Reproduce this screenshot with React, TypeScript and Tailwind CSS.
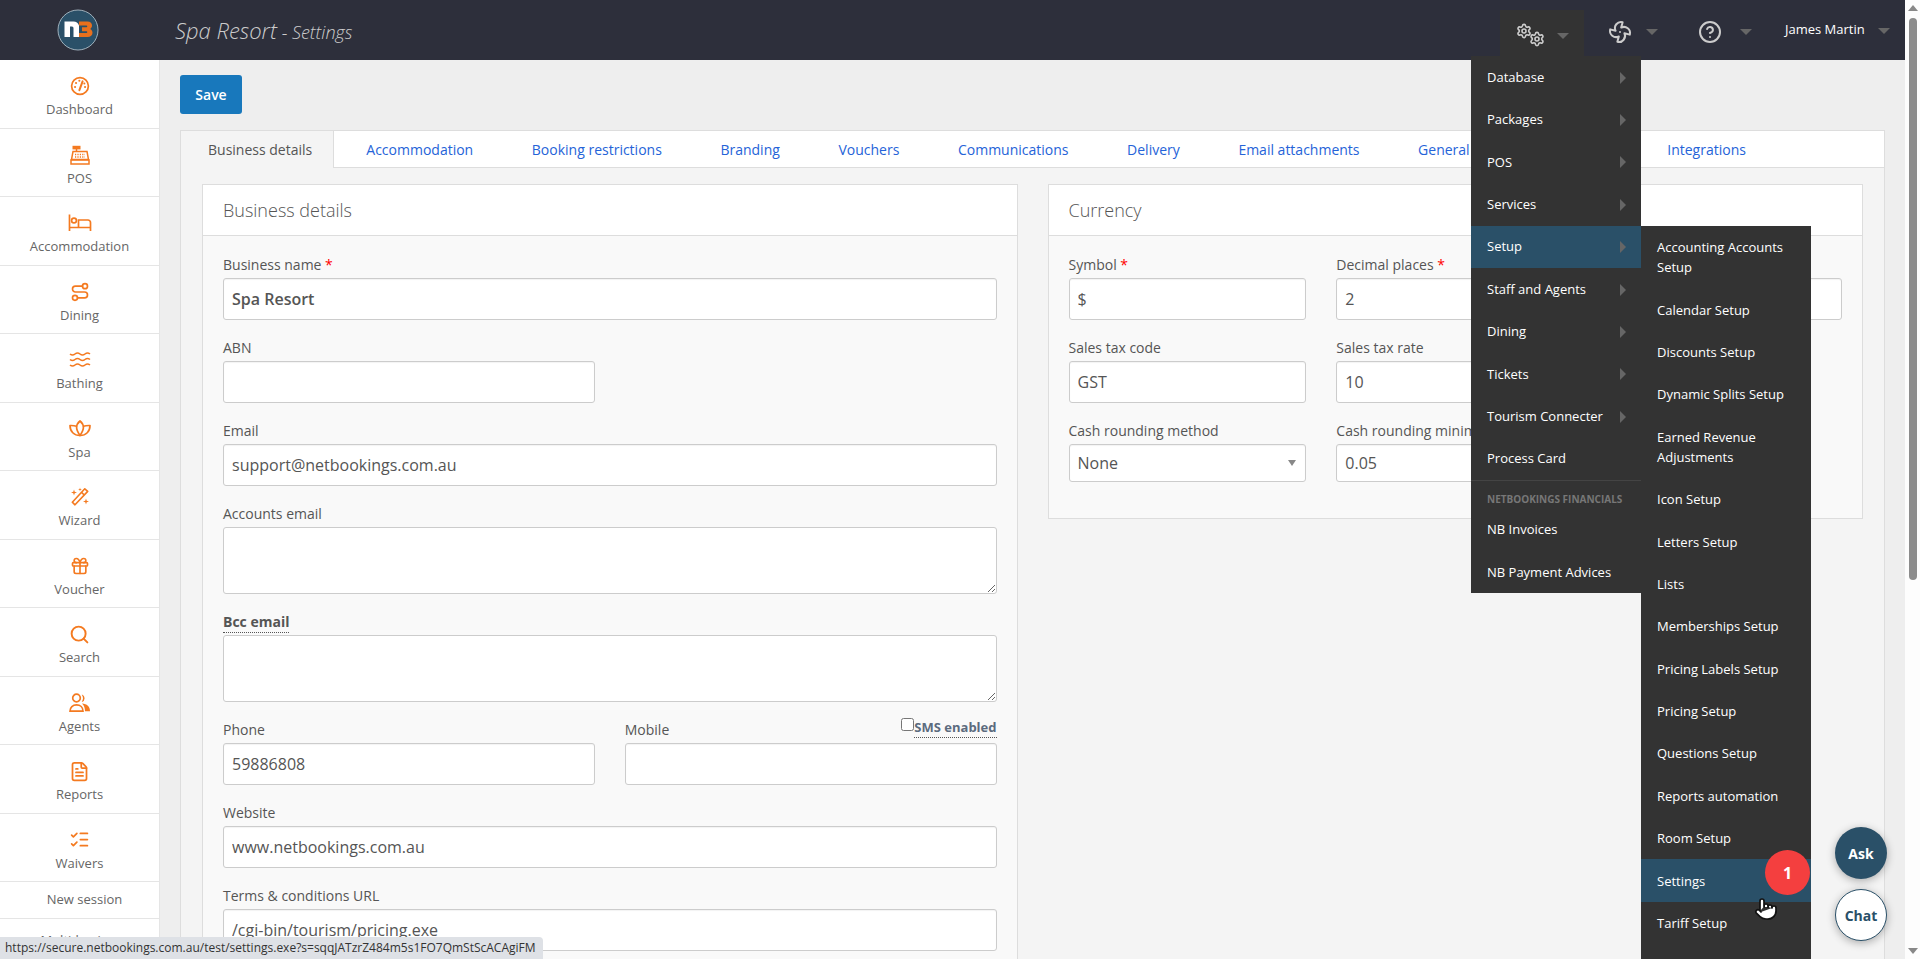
import React from "react";
import { Route, Gift, Search, FileText, ListChecks, Settings, Fan, HelpCircle, Pointer } from "lucide-react";

const O = "#f47a20";

const Gauge = () => (
  <svg width="20" height="20" viewBox="0 0 20 20" fill="none" stroke={O} strokeWidth="1.7" strokeLinecap="round">
    <circle cx="10" cy="10" r="8.4" />
    <path d="M9.4 14.2 12.6 5.4" strokeWidth="2" />
    <path d="M5 11h.1M6 7h.1M9.3 4.8h.1M15 11h.1M14.3 7.4h.1" strokeWidth="2" />
  </svg>
);
const Register = () => (
  <svg width="20" height="20" viewBox="0 0 20 20" fill="none" stroke={O} strokeWidth="1.5">
    <rect x="2.5" y="0.8" width="8" height="3.6" fill={O} stroke="none" />
    <path d="M6.5 4v2.5" />
    <path d="M3 6.5h14l1.5 8H1.5z" />
    <rect x="1" y="15" width="18" height="4" />
    <path d="M5 9.5h10M5 12h10" strokeDasharray="1.2 1.2" />
  </svg>
);
const Bed = () => (
  <svg width="24" height="20" viewBox="0 0 24 20" fill="none" stroke={O} strokeWidth="1.7">
    <path d="M1.5 1.5V18M1.5 14.5h21M22.5 18V9.5a2.5 2.5 0 0 0-2.5-2.5H10.5v7" />
    <circle cx="6" cy="7.5" r="2.4" />
  </svg>
);
const WavesI = () => (
  <svg width="22" height="20" viewBox="0 0 22 20" fill="none" stroke={O} strokeWidth="1.6">
    <path d="M1 4q2.5 2 5 0t5 0 5 0 5 0M1 9.5q2.5 2 5 0t5 0 5 0 5 0M1 15q2.5 2 5 0t5 0 5 0 5 0" />
  </svg>
);
const Lotus = () => (
  <svg width="22" height="20" viewBox="0 0 22 20" fill="none" stroke={O} strokeWidth="1.7" strokeLinejoin="round">
    <path d="M11 2c2.4 2 3.4 4 3.4 6.5 0 2.5-1.4 5-3.4 8-2-3-3.4-5.5-3.4-8C7.600 6 8.600 4 11 2z" />
    <path d="M7.700 7.300C5.500 6.600 3.500 6.400 1 6.500c0 6 4 10 10 10 6 0 10-4 10-10-2.500-.1-4.500.1-6.700.8" />
  </svg>
);
const Wand = () => (
  <svg width="20" height="20" viewBox="0 0 20 20" fill="none" stroke={O} strokeWidth="1.6" strokeLinejoin="round">
    <path d="M14.800 1.800 17.700 4.400 5 17.800 2.300 15.200z" />
    <path d="M11.500 5.300 14.300 8" />
    <path d="M4 2.500 4.700 4.800 7 5.500 4.700 6.200 4 8.500 3.300 6.200 1 5.500 3.300 4.800zM10 .6l.4 1.500 1.500.4-1.500.4-.4 1.500-.4-1.500-1.500-.4 1.500-.4zM16 11.500l.7 2.300 2.300.7-2.300.7-.7 2.300-.7-2.300-2.300-.7 2.300-.7z" fill={O} stroke="none" />
  </svg>
);
const Agents = () => (
  <svg width="22" height="20" viewBox="0 0 22 20" fill="none" stroke={O} strokeWidth="1.7">
    <circle cx="7.500" cy="5" r="3.800" />
    <path d="M1 18.200c0-4 2.800-6.300 6.500-6.300s6.500 2.300 6.500 6.300z" />
    <path d="M13 1.500a4 4 0 0 1 0 7.500c-.8-.2 1-1.500 1-3.800S12.200 1.700 13 1.500zM13 10.500c5 .2 8 3 8 7.700h-5c0-3-1-6-3-7.700z" fill={O} stroke="none" />
  </svg>
);

const side: [string, React.ReactNode][] = [
  ["Dashboard", <Gauge />],
  ["POS", <Register />],
  ["Accommodation", <Bed />],
  ["Dining", <Route size={20} color={O} strokeWidth={2} />],
  ["Bathing", <WavesI />],
  ["Spa", <Lotus />],
  ["Wizard", <Wand />],
  ["Voucher", <Gift size={20} color={O} strokeWidth={2} />],
  ["Search", <Search size={21} color={O} strokeWidth={2.2} />],
  ["Agents", <Agents />],
  ["Reports", <FileText size={21} color={O} strokeWidth={2} />],
  ["Waivers", <ListChecks size={21} color={O} strokeWidth={2} />],
];

const Star = () => <span className="text-[#f00]">*</span>;

function Label({ children, className = "" }: { children: React.ReactNode; className?: string }) {
  return <div className={"h-5 mb-[3px] text-[14px] leading-5 text-[#555] " + className}>{children}</div>;
}
const inputCls =
  "block w-full h-[42px] px-[8px] bg-white border border-[#ccc] rounded-[3px] text-[16px] text-[#555] outline-none shadow-[inset_0_1px_1px_rgba(0,0,0,0.05)]";

function Field({ label, value = "", bold, className = "" }: { label: React.ReactNode; value?: string; bold?: boolean; className?: string }) {
  return (
    <div className={"mb-[18px] " + className}>
      <Label>{label}</Label>
      <input readOnly value={value} className={inputCls + (bold ? " font-semibold" : "")} />
    </div>
  );
}
function Area({ label }: { label: React.ReactNode }) {
  return (
    <div className="mb-[18px]">
      <Label>{label}</Label>
      <textarea readOnly className="block w-full h-[67px] bg-white border border-[#ccc] rounded-[3px] outline-none" />
    </div>
  );
}
function Card({ title, children, className = "" }: { title: string; children: React.ReactNode; className?: string }) {
  return (
    <div className={"flex-1 min-w-0 border border-[#ddd] bg-[#f9f9f9] " + className}>
      <div className="h-[51px] bg-white border-b border-[#ddd] px-5 flex items-center text-[18px] font-light text-[#555]">{title}</div>
      <div className="px-5 pt-[19px] pb-[18px]">{children}</div>
    </div>
  );
}
const Caret = ({ className = "" }: { className?: string }) => (
  <span className={"inline-block w-0 h-0 border-l-[6px] border-r-[6px] border-t-[6px] border-l-transparent border-r-transparent border-t-[#666] " + className} />
);
const Arrow = () => (
  <span className="w-0 h-0 border-t-[6px] border-b-[6px] border-l-[6px] border-t-transparent border-b-transparent border-l-[#666]" />
);

const main1 = ["Database", "Packages", "POS", "Services", "Setup", "Staff and Agents", "Dining", "Tickets", "Tourism Connecter"];
const sub: string[] = [
  "Accounting Accounts Setup", "Calendar Setup", "Discounts Setup", "Dynamic Splits Setup", "Earned Revenue Adjustments",
  "Icon Setup", "Letters Setup", "Lists", "Memberships Setup", "Pricing Labels Setup", "Pricing Setup", "Questions Setup",
  "Reports automation", "Room Setup", "Settings", "Tariff Setup",
];
const tabs = ["Accommodation", "Booking restrictions", "Branding", "Vouchers", "Communications", "Delivery", "Email attachments", "General"];

function MenuItem({ children, active, arrow }: { children: React.ReactNode; active?: boolean; arrow?: boolean }) {
  return (
    <div className={"h-[42.4px] flex items-center justify-between pl-4 pr-[15px] text-[13px] text-white " + (active ? "bg-[#2a5068]" : "")}>
      <span>{children}</span>
      {arrow && <Arrow />}
    </div>
  );
}

export default function App() {
  return (
    <div className="relative h-screen w-full overflow-hidden flex font-['Open_Sans',sans-serif] bg-[#eee]">
      <div className="flex-1 min-w-0 flex flex-col">
        <header className="h-[60px] shrink-0 bg-[#2d2f3b] flex items-center">
          <div className="w-[160px] shrink-0 flex justify-center pl-[-4px]">
            <svg width="42" height="42" viewBox="0 0 42 42" className="-ml-[4px]">
              <circle cx="21" cy="21" r="20" fill="#2a5068" stroke="#9fb0bb" strokeWidth="1" />
              <path d="M7.500 12.500h9a6 6 0 0 1 5.500 4V28h-5.500V19a1.500 1.500 0 0 0-1.500-1.500h-2V28H7.500z" fill="#fff" />
              <path d="M22 12.500h8.500c3 0 4.500 1.800 4.500 4 0 1.700-.8 2.800-2 3.500 1.500.6 2.500 2 2.500 3.800 0 2.500-1.800 4.200-5 4.200H22v-4h7.500c1 0 1-1.700 0-1.700H25v-4h4.500c1 0 1-1.700 0-1.700H22z" fill="#e8701d" />
            </svg>
          </div>
          <div className="pl-[15px] italic font-light text-[#ccc] whitespace-nowrap">
            <span className="text-[22px]">Spa Resort</span>
            <span className="text-[18px]"> - Settings</span>
          </div>
          <div className="ml-auto flex items-stretch self-stretch text-[#ccc]">
            <div className="mt-[10px] w-[84px] bg-[#333] flex items-center pl-4">
              <svg width="29" height="24" viewBox="0 0 29 24" className="shrink-0 -mt-[1px]">
                <Settings x={0} y={0} size={16} color="#ccc" strokeWidth={2.4} />
                <Settings x={13} y={8} size={16} color="#ccc" strokeWidth={2.4} />
              </svg>
              <Caret className="ml-[12px] mt-[2px]" />
            </div>
            <div className="w-[90px] flex items-center pl-[24px] pt-[4px]">
              <Fan size={24} color="#ccc" strokeWidth={2} />
              <Caret className="ml-[14px]" />
            </div>
            <div className="w-[90px] flex items-center pl-[24px] pt-[4px]">
              <HelpCircle size={24} color="#ccc" strokeWidth={2} />
              <Caret className="ml-[18px]" />
            </div>
            <div className="w-[140px] flex items-center pl-[21px] text-[13px] text-white">
              James Martin
              <Caret className="ml-[13px] mt-[1px]" />
            </div>
            <div className="w-[1px]" />
          </div>
        </header>

        <div className="flex-1 min-h-0 flex">
          <aside className="w-[160px] shrink-0 bg-white border-r border-[#e5e5e5] overflow-hidden">
            {side.map(([name, icon]) => (
              <div key={name} className="h-[68.5px] border-b border-[#e5e5e5] flex flex-col items-center pt-[16px]">
                <div className="h-5 flex items-center justify-center">{icon}</div>
                <div className="mt-1 text-[13px] leading-[18px] text-[#666]">{name}</div>
              </div>
            ))}
            <div className="h-[37px] border-b border-[#e5e5e5] pl-[10px] flex items-center justify-center text-[13px] text-[#666]">New session</div>
            <div className="h-[40px] pl-[10px] pt-[12px] text-center text-[13px] text-[#666]">Multi-business</div>
          </aside>

          <main className="flex-1 min-w-0 pl-5 pr-5 pt-[15px] overflow-hidden">
            <button className="block w-[62px] h-[39px] rounded-[3px] bg-[#1878bc] text-white text-[14px] font-semibold">Save</button>
            <div className="mt-4 border border-[#ddd] bg-[#f4f4f4]">
              <div className="h-[37px] bg-white border-b border-[#ddd] flex items-center text-[14px]">
                <div className="w-[153px] h-[37px] -mb-px bg-[#f4f4f4] border-r border-[#ddd] pl-[27px] flex items-center text-[#555] whitespace-nowrap">Business details</div>
                <div className="w-[3px]" />
                {tabs.map((t) => (
                  <div key={t} className="px-[29.300px] text-[#2563d8] whitespace-nowrap">{t}</div>
                ))}
                <div className="w-[139px]" />
                <div className="px-[29.300px] text-[#2563d8] whitespace-nowrap">Integrations</div>
              </div>
              <div className="px-[21px] pt-[16px] flex items-start gap-[30px]">
                <Card title="Business details">
                  <Field label={<>Business name <Star /></>} value="Spa Resort" bold />
                  <div className="grid grid-cols-2 gap-x-[30px]">
                    <Field label="ABN" />
                  </div>
                  <Field label="Email" value="support@netbookings.com.au" />
                  <Area label="Accounts email" />
                  <Area label={<span className="font-bold border-b border-dotted border-[#555] pb-[1px]">Bcc email</span>} />
                  <div className="grid grid-cols-2 gap-x-[30px]">
                    <Field label="Phone" value="59886808" />
                    <div className="mb-[18px] relative">
                      <Label>Mobile</Label>
                      <input readOnly value="" className={inputCls} />
                      <div className="absolute right-0 -top-[1px] flex items-start">
                        <span className="w-[13px] h-[13px] mt-[-1px] border border-[#767676] rounded-[2.500px] bg-white" />
                        <span className="text-[13px] leading-[17px] font-bold text-[#5c6b7e] border-b border-dotted border-[#555] pb-[1px]">SMS enabled</span>
                      </div>
                    </div>
                  </div>
                  <Field label="Website" value="www.netbookings.com.au" />
                  <Field label="Terms & conditions URL" value="/cgi-bin/tourism/pricing.exe" />
                </Card>
                <Card title="Currency">
                  <div className="grid grid-cols-3 gap-x-[30px]">
                    <Field label={<>Symbol <Star /></>} value="$" />
                    <Field label={<>Decimal places <Star /></>} value="2" />
                    <Field label="" />
                    <Field label="Sales tax code" value="GST" />
                    <Field label="Sales tax rate" value="10" />
                    <div />
                    <div>
                      <Label>Cash rounding method</Label>
                      <div className="relative">
                        <select className={inputCls + " !h-[38px] appearance-none"} defaultValue="None">
                          <option>None</option>
                        </select>
                        <span className="absolute right-[10px] top-[16px] w-0 h-0 border-l-[4px] border-r-[4px] border-t-[6px] border-l-transparent border-r-transparent border-t-[#888]" />
                      </div>
                    </div>
                    <div>
                      <Label>Cash rounding minimum</Label>
                      <input readOnly value="0.05" className={inputCls + " !h-[38px]"} />
                    </div>
                  </div>
                  <div className="h-[18px]" />
                </Card>
              </div>
            </div>
          </main>
        </div>
      </div>

      <div className="w-[15px] shrink-0 bg-[#fdfdfd] flex flex-col items-center">
        <span className="mt-[5px] w-0 h-0 border-l-[5px] border-r-[5px] border-b-[6px] border-l-transparent border-r-transparent border-b-[#888]" />
        <span className="mt-[7px] w-[8px] h-[562px] rounded-[4px] bg-[#8c8c8c]" />
        <span className="mt-auto mb-[5px] w-0 h-0 border-l-[5px] border-r-[5px] border-t-[6px] border-l-transparent border-r-transparent border-t-[#888]" />
      </div>

      {/* open dropdown */}
      <div className="absolute left-[1471px] top-[56.400px] w-[170px] bg-[#333]">
        {main1.map((m) => (
          <MenuItem key={m} active={m === "Setup"} arrow>{m}</MenuItem>
        ))}
        <MenuItem>Process Card</MenuItem>
        <div className="h-[28.400px] border-t border-[#444] pl-[16px] pt-[11px] text-[10px] leading-[14px] font-bold text-[#777] whitespace-nowrap">NETBOOKINGS FINANCIALS</div>
        <MenuItem>NB Invoices</MenuItem>
        <MenuItem>NB Payment Advices</MenuItem>
      </div>
      <div className="absolute left-[1641px] top-[226px] w-[170px] h-[733px] bg-[#333]">
        {sub.map((s) => (
          <div
            key={s}
            className={
              "flex items-center pl-4 pr-3 text-[13px] leading-5 text-white " +
              (s === "Accounting Accounts Setup" || s === "Earned Revenue Adjustments" ? "h-[62.400px]" : "h-[42.400px]") +
              (s === "Settings" ? " bg-[#2a5068]" : "")
            }
          >
            {s}
          </div>
        ))}
      </div>

      {/* step badge and pointer */}
      <div className="absolute left-[1765px] top-[850px] w-[45px] h-[45px] rounded-full bg-[#f43f3f] flex items-center justify-center text-white font-bold text-[16px]">1</div>
      <div className="absolute left-[1754px] top-[897px]">
        <Pointer size={24} color="#111" fill="#fff" strokeWidth={1.7} />
      </div>

      {/* floating buttons */}
      <div className="absolute left-[1835px] top-[827px] w-[52px] h-[52px] rounded-full bg-[#2a5068] text-white font-bold text-[14px] flex items-center justify-center shadow-[0_2px_8px_rgba(0,0,0,0.3)]">Ask</div>
      <div className="absolute left-[1835px] top-[889px] w-[52px] h-[52px] rounded-full bg-white border border-[#2a5068] text-[#2a5068] font-bold text-[14px] flex items-center justify-center shadow-[0_2px_8px_rgba(0,0,0,0.3)]">Chat</div>

      {/* browser status bubble */}
      <div className="absolute left-0 bottom-0 h-[22px] pl-[5px] pr-[7px] bg-[#dee1e6] rounded-tr-[4px] text-[12px] leading-[22px] text-[#333] whitespace-nowrap">
        https://secure.netbookings.com.au/test/settings.exe?s=sqqJATzrZ484m5s1FO7QmStScACAgiFM
      </div>
    </div>
  );
}
